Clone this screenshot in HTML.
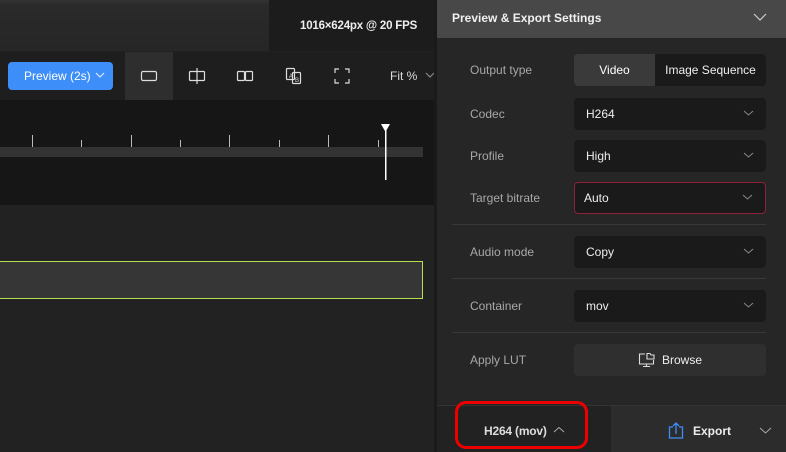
<!DOCTYPE html>
<html><head><meta charset="utf-8"><style>
*{margin:0;padding:0;box-sizing:border-box}
body{width:786px;height:452px;overflow:hidden;background:#222;font-family:"Liberation Sans",sans-serif;position:relative;color:#ddd}
.a{position:absolute}
.lbl{position:absolute;left:470px;font-size:12px;color:#a8a8a8}
.sel{position:absolute;left:574px;width:192px;height:32px;background:#1a1a1a;border-radius:4px;font-size:12px;color:#eee;padding-left:12px;line-height:32px}
.chev{position:absolute;right:12px;top:11px}
.div{position:absolute;left:452px;width:314px;height:1px;background:#383838}
</style></head><body>
<div class="a" style="left:0;top:0;width:436px;height:51px;background:#1c1c1c"></div>
<div class="a" style="left:0;top:0;width:269px;height:51px;background:linear-gradient(180deg,#333 0,#2a2a2a 10%,#262626 100%)"></div>
<div class="a" style="left:300px;top:20px;font-size:11.5px;font-weight:bold;color:#eee;letter-spacing:-0.2px">1016×624px @ 20 FPS</div>
<div class="a" style="left:0;top:52px;width:436px;height:48px;background:#1e1e1e"></div>
<div class="a" style="left:8px;top:62px;width:105px;height:28px;background:#3d8ef8;border-radius:4px;color:#fff;font-size:12px;line-height:28px;padding-left:16px">Preview (2s)
<svg class="a" style="left:87px;top:10px" width="10" height="7" viewBox="0 0 10 7"><path d="M1 1l4 4 4-4" stroke="#dbe8ff" fill="none" stroke-width="1.2"/></svg></div>
<div class="a" style="left:125px;top:52px;width:48px;height:48px;background:#2e2e2e"></div>
<svg class="a" style="left:0;top:52px" width="436" height="48">
<g stroke="#ddd" fill="none" stroke-width="1.2">
<rect x="141.5" y="19.5" width="15" height="9" rx="1.5"/>
<rect x="189.5" y="19.5" width="15" height="9" rx="1"/><path d="M197 16v16"/>
<rect x="237.5" y="19.5" width="7" height="9" rx="1"/><rect x="245.5" y="19.5" width="7" height="9" rx="1"/>
<rect x="286.5" y="16.5" width="8" height="11" rx="1"/><rect x="292.5" y="20.5" width="8" height="11" rx="1"/>
<path d="M335 21v-4h4M345 17h4v4M349 27v4h-4M339 31h-4v-4"/>
<path d="M426 21l4 4 4-4" stroke="#888"/>
</g>
<text x="289" y="26" font-size="6" fill="#ddd" font-family="Liberation Sans">A</text>
<text x="295" y="30" font-size="6" fill="#ddd" font-family="Liberation Sans">B</text>
<text x="390" y="28" font-size="12" fill="#ddd" font-family="Liberation Sans">Fit %</text>
</svg>
<div class="a" style="left:0;top:100px;width:436px;height:105px;background:#161616"></div>
<div class="a" style="left:0;top:147px;width:423px;height:10px;background:#333"></div>
<svg class="a" style="left:0;top:100px" width="436" height="105">
<g stroke="#bbb" stroke-width="1">
<path d="M32.5 35v12M81.5 40v7M131.5 35v12M180.5 40v7M229.5 35v12M279.5 40v7M328.5 35v12M378.5 40v7"/>
</g>
<path d="M381 24h9l-4.5 8z" fill="#fff"/><rect x="385" y="28" width="1.5" height="52" fill="#fff"/>
</svg>
<div class="a" style="left:-2px;top:261px;width:425px;height:38px;background:#363636;border:1.5px solid #b8e04c"></div>
<div class="a" style="left:434px;top:0;width:3px;height:452px;background:#1a1a1a"></div>
<div class="a" style="left:437px;top:0;width:349px;height:452px;background:#262626"></div>
<div class="a" style="left:437px;top:0;width:349px;height:38px;background:#484848"></div>
<div class="a" style="left:452px;top:11px;font-size:12px;font-weight:bold;color:#f0f0f0">Preview &amp; Export Settings</div>
<svg class="a" style="left:753px;top:13px" width="14" height="9"><path d="M1 1l6 6 6-6" stroke="#ccc" fill="none" stroke-width="1.2"/></svg>

<div class="lbl" style="top:63px">Output type</div>
<div class="a" style="left:574px;top:54px;width:192px;height:32px;background:#1a1a1a;border-radius:4px"></div>
<div class="a" style="left:574px;top:54px;width:81px;height:32px;background:#3a3a3a;border-radius:4px 0 0 4px;font-size:12px;color:#fff;text-align:center;line-height:32px">Video</div>
<div class="a" style="left:655px;top:54px;width:111px;height:32px;font-size:12px;color:#eee;text-align:center;line-height:32px">Image Sequence</div>

<div class="lbl" style="top:107px">Codec</div>
<div class="sel" style="top:98px">H264<svg class="chev" width="11" height="8"><path d="M1 2l4.5 4 4.5-4" stroke="#888" fill="none"/></svg></div>
<div class="lbl" style="top:149px">Profile</div>
<div class="sel" style="top:140px">High<svg class="chev" width="11" height="8"><path d="M1 2l4.5 4 4.5-4" stroke="#888" fill="none"/></svg></div>
<div class="lbl" style="top:191px">Target bitrate</div>
<div class="sel" style="top:182px;border:1px solid #8c2038;line-height:30px;padding-left:9px">Auto<svg class="chev" style="top:10px" width="11" height="8"><path d="M1 2l4.5 4 4.5-4" stroke="#888" fill="none"/></svg></div>
<div class="div" style="top:224px"></div>
<div class="lbl" style="top:245px">Audio mode</div>
<div class="sel" style="top:236px">Copy<svg class="chev" width="11" height="8"><path d="M1 2l4.5 4 4.5-4" stroke="#888" fill="none"/></svg></div>
<div class="div" style="top:278px"></div>
<div class="lbl" style="top:299px">Container</div>
<div class="sel" style="top:290px">mov<svg class="chev" width="11" height="8"><path d="M1 2l4.5 4 4.5-4" stroke="#888" fill="none"/></svg></div>
<div class="div" style="top:332px"></div>
<div class="lbl" style="top:353px">Apply LUT</div>
<div class="a" style="left:574px;top:344px;width:192px;height:32px;background:#2f2f2f;border-radius:4px;font-size:12px;color:#eee;line-height:32px;padding-left:88px">Browse
<svg class="a" style="left:64px;top:8px" width="18" height="16"><g stroke="#ddd" fill="none" stroke-width="1.1"><path d="M7 2H1.5v10h14V8"/><path d="M9 1.5h3l1 1.5h3v4H9z"/><path d="M8.5 12v2M5 14.5h7"/></g></svg></div>

<div class="a" style="left:437px;top:405px;width:349px;height:1px;background:#333"></div>
<div class="a" style="left:437px;top:406px;width:174px;height:46px;background:#222"></div>
<div class="a" style="left:611px;top:406px;width:175px;height:46px;background:#2c2c2c"></div>
<div class="a" style="left:484px;top:424px;font-size:12px;font-weight:bold;color:#ddd;letter-spacing:-0.2px">H264 (mov)</div>
<svg class="a" style="left:553px;top:426px" width="12" height="8"><path d="M1 6l5-4.5 5 4.5" stroke="#aaa" fill="none"/></svg>
<div class="a" style="left:455px;top:401px;width:133px;height:48px;border:3px solid #e00;border-radius:11px"></div>
<svg class="a" style="left:668px;top:421px" width="16" height="18"><g stroke="#3d8ef8" fill="none" stroke-width="1.3"><path d="M5 6H1.5v11h13V6H11"/><path d="M8 13V2M5 5l3-3 3 3"/></g></svg>
<div class="a" style="left:693px;top:424px;font-size:12px;font-weight:bold;color:#eee">Export</div>
<svg class="a" style="left:759px;top:427px" width="13" height="8"><path d="M1 1l5.5 5 5.5-5" stroke="#aaa" fill="none"/></svg>
</body></html>
